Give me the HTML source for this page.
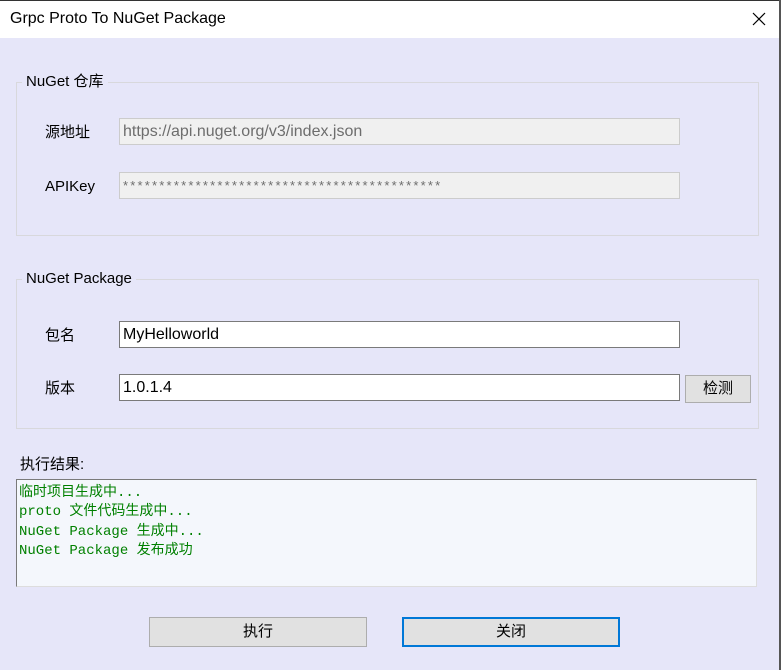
<!DOCTYPE html>
<html><head><meta charset="utf-8"><style>
*{margin:0;padding:0;box-sizing:border-box}
body{width:781px;height:670px;overflow:hidden;background:#e6e6f9;font-family:"Liberation Sans","Noto Sans CJK SC",sans-serif;font-size:15px;color:#000;position:relative}
.abs{position:absolute}
#title{left:0;top:0;width:781px;height:38px;background:#fff;border-top:1px solid #333}
#title span{position:absolute;left:10px;top:9px;font-size:16px}
#rb{left:779px;top:0;width:2px;height:670px;background:#555}
.grp{border:1px solid #d8d8dc}
.leg{background:#e6e6f9;padding:0 4px;font-size:15px;line-height:18px}
.lbl{font-size:15px;line-height:18px}
.inp{border:1px solid #7a7a7a;background:#fff;font-size:16px;padding-left:3px;line-height:25px}
.ro{border:1px solid #ccc;background:#f0f0f0;color:#6d6d6d}
.btn{border:1px solid #adadad;background:#e1e1e1;text-align:center;font-size:15px}
</style></head><body>
<div id="title" class="abs"><span>Grpc Proto To NuGet Package</span>
<svg class="abs" style="left:752px;top:11px" width="14" height="14"><path d="M1 1L13 13M13 1L1 13" stroke="#000" stroke-width="1.2"/></svg></div>
<div id="rb" class="abs"></div>

<div class="abs grp" style="left:16px;top:82px;width:743px;height:154px"></div>
<div class="abs leg" style="left:22px;top:73px">NuGet 仓库</div>
<div class="abs lbl" style="left:45px;top:124px">源地址</div>
<div class="abs inp ro" style="left:119px;top:118px;width:561px;height:27px">https://api.nuget.org/v3/index.json</div>
<div class="abs lbl" style="left:45px;top:178px">APIKey</div>
<div class="abs inp ro" style="left:119px;top:172px;width:561px;height:27px;font-size:13px;letter-spacing:2.2px">********************************************</div>

<div class="abs grp" style="left:16px;top:279px;width:743px;height:150px"></div>
<div class="abs leg" style="left:22px;top:270px">NuGet Package</div>
<div class="abs lbl" style="left:45px;top:327px">包名</div>
<div class="abs inp" style="left:119px;top:321px;width:561px;height:27px">MyHelloworld</div>
<div class="abs lbl" style="left:45px;top:380px">版本</div>
<div class="abs inp" style="left:119px;top:374px;width:561px;height:27px">1.0.1.4</div>
<div class="abs btn" style="left:685px;top:375px;width:66px;height:28px;line-height:26px">检测</div>

<div class="abs lbl" style="left:20px;top:456px">执行结果:</div>
<div class="abs" style="left:16px;top:479px;width:741px;height:108px;background:#f4f7fc;border:1px solid #7a7a7a;border-bottom-color:#ddd;border-right-color:#ddd;color:#008000;font-family:'Liberation Mono','Noto Sans CJK SC',monospace;font-size:14px;line-height:19.3px;padding:4px 0 0 2px;white-space:pre">临时项目生成中...
proto 文件代码生成中...
NuGet Package 生成中...
NuGet Package 发布成功</div>

<div class="abs btn" style="left:149px;top:617px;width:218px;height:30px;line-height:28px">执行</div>
<div class="abs btn" style="left:402px;top:617px;width:218px;height:30px;line-height:26px;border:2px solid #0078d7">关闭</div>
</body></html>
